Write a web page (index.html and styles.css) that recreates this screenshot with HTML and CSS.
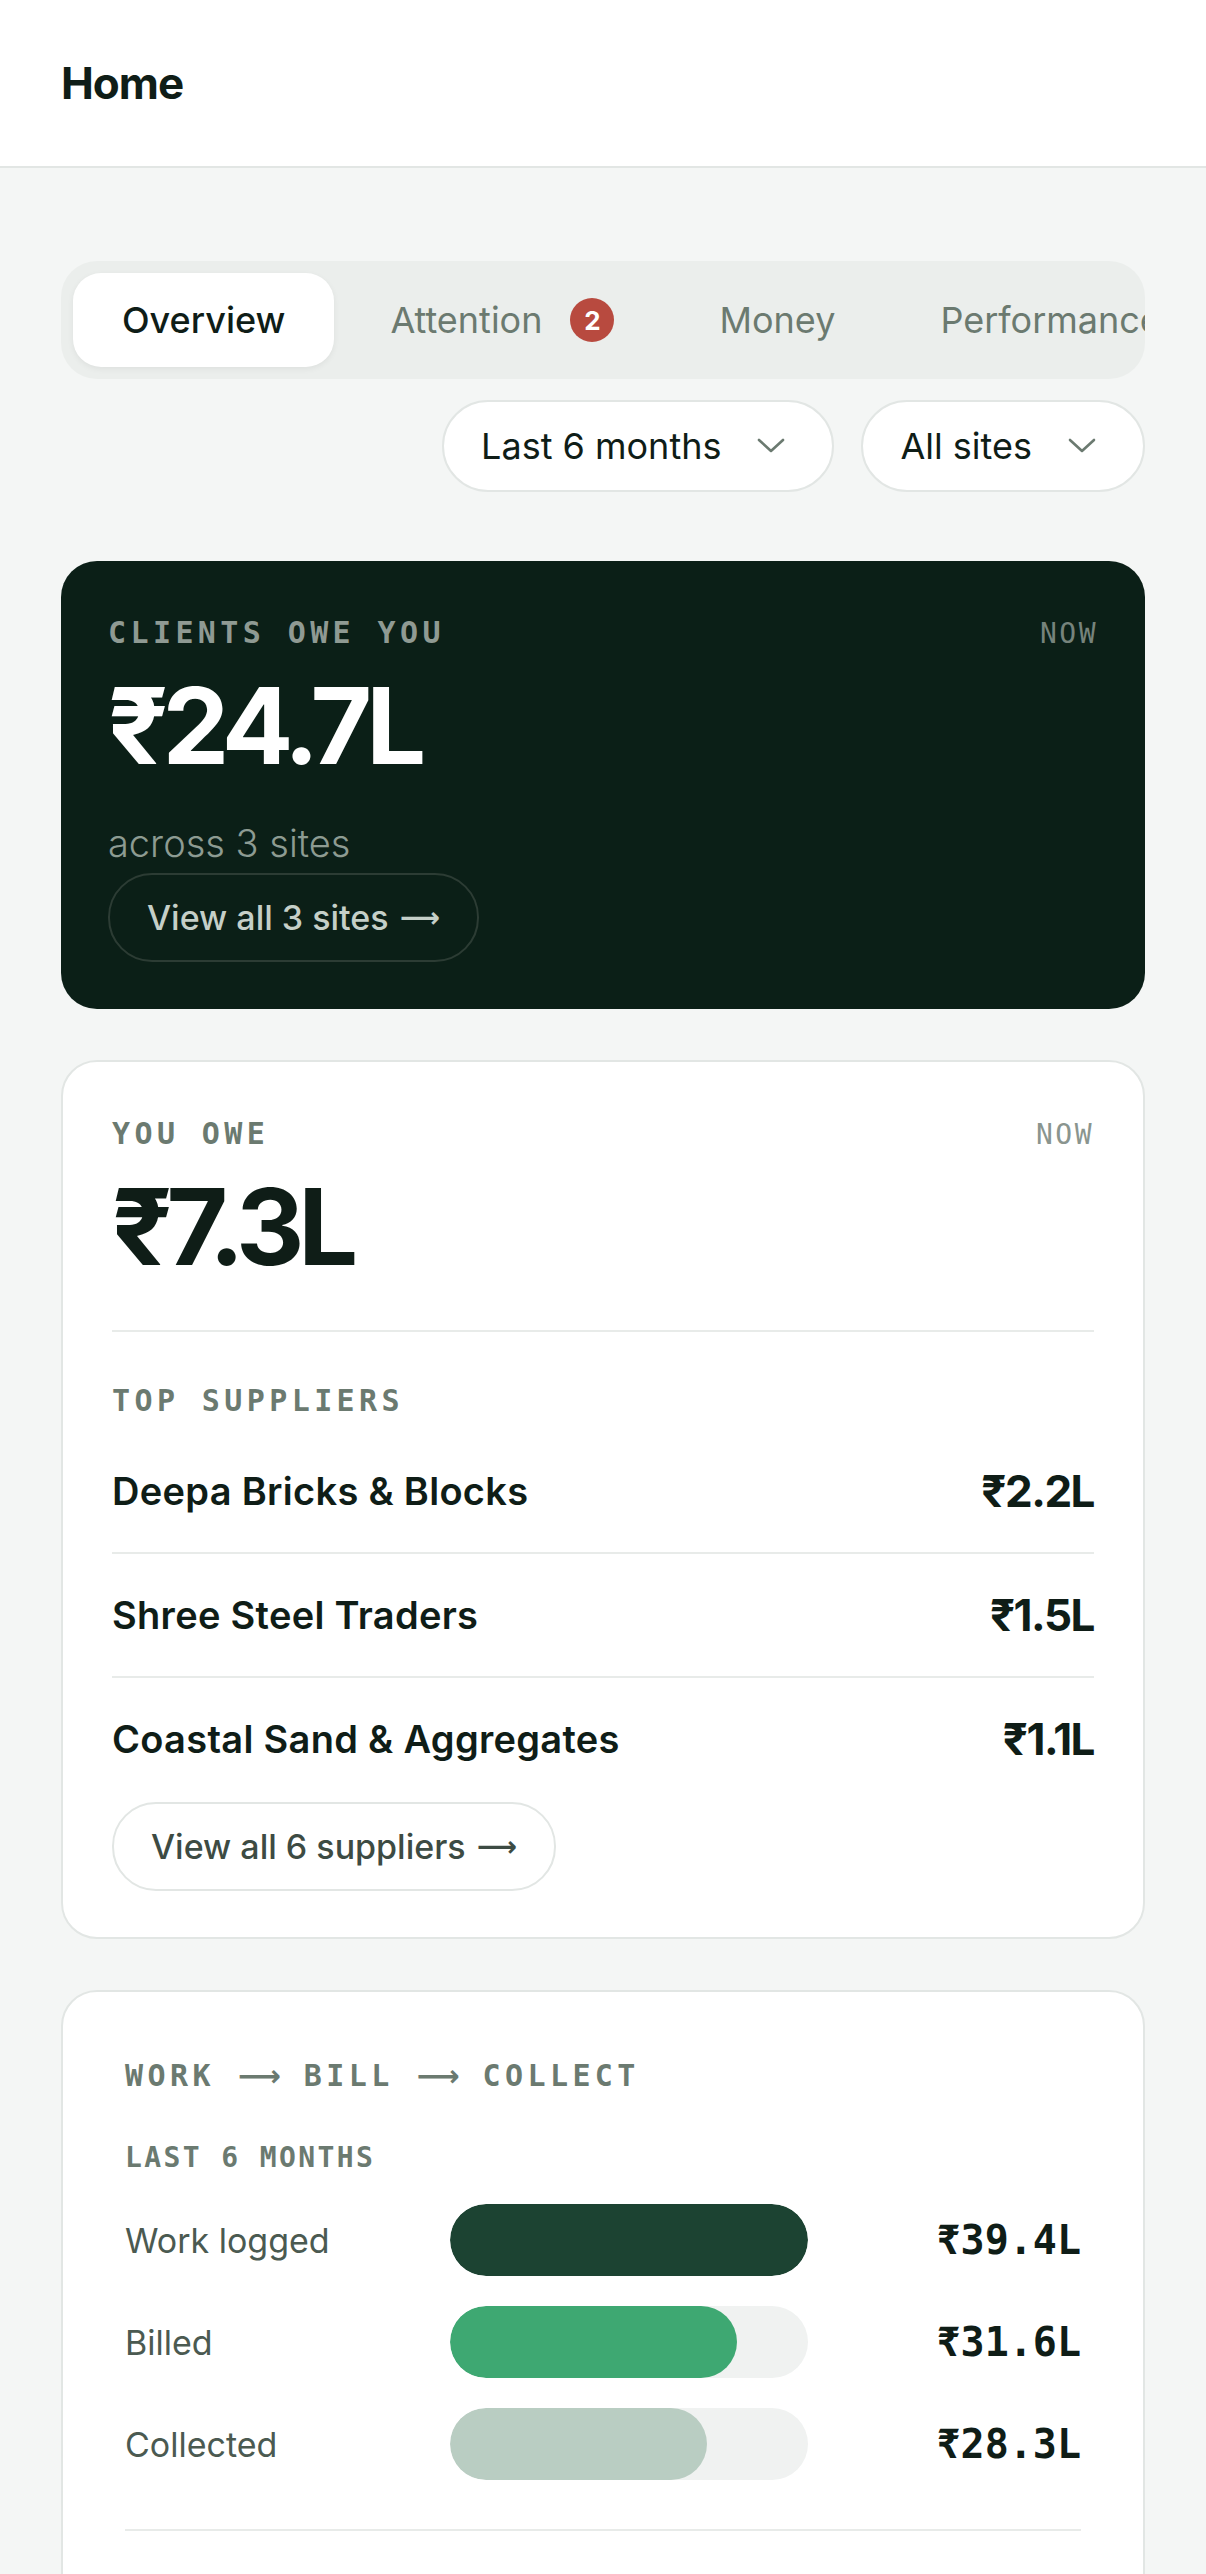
FILE: index.html
```html
<!DOCTYPE html>
<html lang="en">
<head>
  <meta charset="UTF-8">
  <meta name="viewport" content="width=device-width, initial-scale=1.0">
  <title>Home</title>
  <link rel="stylesheet" href="styles.css">
</head>
<body>
  <header class="topbar">
    <h1>Home</h1>
  </header>

  <main class="page">
    <nav class="tabs">
      <div class="tab active">Overview</div>
      <div class="tab">Attention <span class="badge">2</span></div>
      <div class="tab">Money</div>
      <div class="tab">Performance</div>
    </nav>

    <div class="filters">
      <button class="select">Last 6 months
        <svg class="chevron" viewBox="0 0 28 16" fill="none"><path d="M2 2L14 13L26 2" stroke="currentColor" stroke-width="2.6" stroke-linecap="round" stroke-linejoin="round"/></svg>
      </button>
      <button class="select">All sites
        <svg class="chevron" viewBox="0 0 28 16" fill="none"><path d="M2 2L14 13L26 2" stroke="currentColor" stroke-width="2.6" stroke-linecap="round" stroke-linejoin="round"/></svg>
      </button>
    </div>

    <!-- receivables -->
    <section class="card dark">
      <div class="card-head">
        <span class="label">CLIENTS OWE YOU</span>
        <span class="stamp">NOW</span>
      </div>
      <div class="amount">₹24.7L</div>
      <p class="sub">across 3 sites</p>
      <a class="pill-link">View all 3 sites <span class="link-arrow">⟶</span></a>
    </section>

    <!-- payables -->
    <section class="card">
      <div class="card-head">
        <span class="label">YOU OWE</span>
        <span class="stamp">NOW</span>
      </div>
      <div class="amount">₹7.3L</div>
      <hr class="divider">
      <div class="label">TOP SUPPLIERS</div>
      <ul class="suppliers">
        <li><span>Deepa Bricks &amp; Blocks</span><strong>₹2.2L</strong></li>
        <li><span>Shree Steel Traders</span><strong>₹1.5L</strong></li>
        <li><span>Coastal Sand &amp; Aggregates</span><strong>₹1.1L</strong></li>
      </ul>
      <a class="pill-link">View all 6 suppliers <span class="link-arrow">⟶</span></a>
    </section>

    <!-- pipeline -->
    <section class="card flow">
      <div class="label">WORK <span class="arrow">⟶</span> BILL <span class="arrow">⟶</span> COLLECT</div>
      <div class="sublabel">LAST 6 MONTHS</div>
      <div class="bars">
        <span class="bar-name">Work logged</span>
        <div class="track"><div class="fill work" style="width: 100%"></div></div>
        <span class="bar-value">₹39.4L</span>

        <span class="bar-name">Billed</span>
        <div class="track"><div class="fill billed" style="width: 80.2%"></div></div>
        <span class="bar-value">₹31.6L</span>

        <span class="bar-name">Collected</span>
        <div class="track"><div class="fill collected" style="width: 71.8%"></div></div>
        <span class="bar-value">₹28.3L</span>
      </div>
      <hr class="divider">
    </section>
  </main>
</body>
</html>
```

FILE: styles.css
```css
body {
  margin: 0;
  font-family: 'Inter', 'Noto Sans', sans-serif;
  background-color: #f4f6f5;
  color: #0f1d17;
}

.topbar {
  height: 166px;
  background-color: white;
  border-bottom: 2px solid #e2e6e4;
  display: flex;
  align-items: center;
  padding: 0 61px;
}

.topbar h1 {
  margin: 0;
  font-size: 44px;
  font-weight: 700;
  letter-spacing: -1px;
}

.page {
  padding: 93px 61px 0;
}

/* tabs */
.tabs {
  height: 118px;
  box-sizing: border-box;
  padding: 12px;
  border-radius: 36px;
  background-color: #ebeeec;
  display: flex;
  gap: 7px;
  overflow: hidden;
}

.tab {
  flex-shrink: 0;
  display: flex;
  align-items: center;
  padding: 0 49px;
  border-radius: 28px;
  font-size: 36px;
  color: #6b7a70;
  white-space: nowrap;
}

.tab.active {
  background-color: white;
  color: #0f1d17;
  font-weight: 500;
  box-shadow: 0 2px 6px rgba(0, 0, 0, 0.06);
}

.badge {
  width: 44px;
  height: 44px;
  margin-left: 28px;
  border-radius: 50%;
  background-color: #b84a3f;
  color: white;
  font-size: 26px;
  font-weight: 700;
  display: flex;
  align-items: center;
  justify-content: center;
}

/* filters */
.filters {
  margin-top: 21px;
  display: flex;
  justify-content: flex-end;
  gap: 27px;
}

.select {
  height: 92px;
  padding: 0 47px 0 37px;
  display: flex;
  align-items: center;
  gap: 36px;
  background-color: white;
  border: 2px solid #e2e6e4;
  border-radius: 46px;
  font-family: inherit;
  font-size: 36px;
  color: #0f1d17;
}

.chevron {
  width: 28px;
  height: 16px;
  color: #6b7a70;
}

/* cards */
.card {
  margin-top: 51px;
  padding: 54px 49px 46px;
  background-color: white;
  border: 2px solid #e2e6e4;
  border-radius: 36px;
}

.card.dark {
  margin-top: 69px;
  padding: 54px 47px 47px;
  background-color: #0b1f17;
  border: none;
  color: white;
}

.card-head {
  display: flex;
  justify-content: space-between;
  align-items: baseline;
}

.label {
  font-family: 'DejaVu Sans Mono', monospace;
  font-size: 30px;
  line-height: 36px;
  font-weight: 700;
  letter-spacing: 4.4px;
  color: #6b7a70;
}

.dark .label {
  color: #8f9a93;
}

.arrow {
  display: inline-flex;
  justify-content: center;
  width: 44px;
  font-family: 'DejaVu Sans', sans-serif;
  font-weight: 700;
  letter-spacing: 0;
}

.stamp {
  font-family: 'DejaVu Sans Mono', monospace;
  font-size: 28px;
  letter-spacing: 2.5px;
  color: #8a958f;
}

.dark .stamp {
  color: #76837c;
}

.amount {
  margin-top: 22px;
  font-size: 106px;
  line-height: 106px;
  font-weight: 700;
  letter-spacing: -6px;
}

.sub {
  margin: 42px 0 8px;
  font-size: 38px;
  line-height: 44px;
  font-weight: 300;
  color: #8d9b92;
}

.pill-link {
  display: inline-flex;
  align-items: center;
  gap: 11px;
  height: 85px;
  padding: 0 37px;
  border: 2px solid #e2e6e4;
  border-radius: 44px;
  font-size: 34px;
  font-weight: 500;
  color: #3d4b43;
}

.link-arrow {
  font-family: 'DejaVu Sans', sans-serif;
  font-size: 28px;
  font-weight: 700;
}

.dark .pill-link {
  border-color: #2c3c34;
  color: #c5cfc8;
}

.divider {
  margin: 0;
  border: none;
  border-top: 2px solid #e8ebe9;
}

.card .amount + .divider {
  margin: 50px 0 51px;
}

/* suppliers */
.suppliers {
  list-style: none;
  margin: 11px 0 2px;
  padding: 0;
}

.suppliers li {
  height: 122px;
  display: flex;
  justify-content: space-between;
  align-items: center;
  border-bottom: 2px solid #e8ebe9;
  font-size: 38px;
  font-weight: 600;
  letter-spacing: 0.3px;
}

.suppliers li:last-child {
  border-bottom: none;
}

.suppliers strong {
  font-size: 44px;
  font-weight: 700;
  letter-spacing: -1.5px;
}

/* work / bill / collect */
.card.flow {
  padding: 66px 62px 200px;
}

.sublabel {
  margin-top: 47px;
  font-family: 'DejaVu Sans Mono', monospace;
  font-size: 28px;
  line-height: 34px;
  font-weight: 700;
  letter-spacing: 2.4px;
  color: #6b7a70;
}

.bars {
  margin: 29px 0 49px;
  display: grid;
  grid-template-columns: 295px 358px 1fr;
  column-gap: 30px;
  row-gap: 30px;
  align-items: center;
}

.bar-name {
  font-size: 34px;
  color: #4b5a51;
}

.track {
  height: 72px;
  border-radius: 36px;
  background-color: #f0f2f1;
  overflow: hidden;
}

.fill {
  height: 100%;
  border-radius: 36px;
}

.fill.work {
  background-color: #1c4332;
}

.fill.billed {
  background-color: #3ea872;
}

.fill.collected {
  background-color: #b9cdc2;
}

.bar-value {
  text-align: right;
  font-family: 'DejaVu Sans Mono', monospace;
  font-size: 40px;
  font-weight: 700;
  color: #0f1d17;
}
```
